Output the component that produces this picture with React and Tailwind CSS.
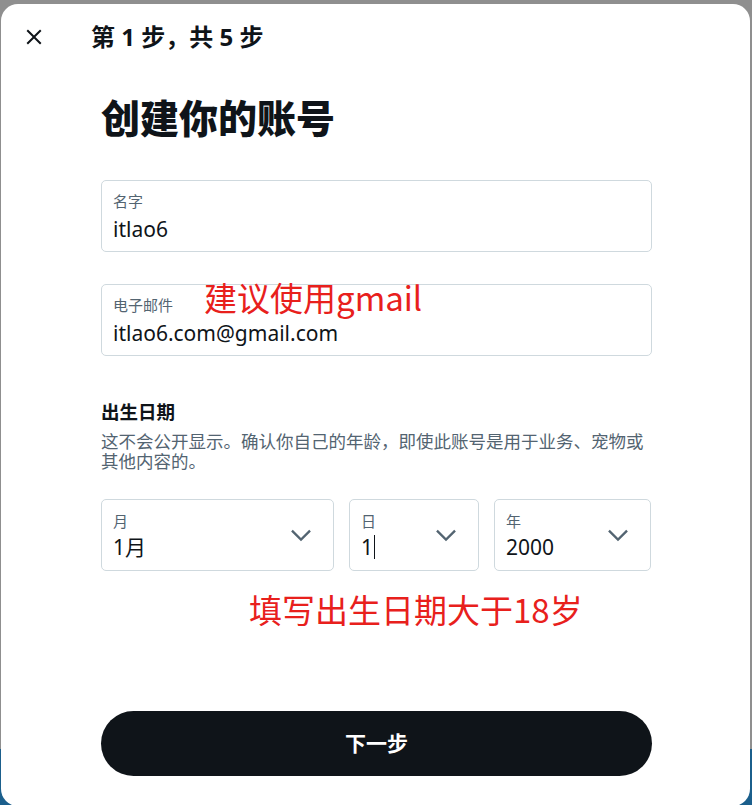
import React from 'react'

const font = "font-['Segoe_UI','Noto_Sans','Noto_Sans_CJK_SC',sans-serif]"

function Chevron() {
  return (
    <svg viewBox="0 0 24 24" className="w-[28px] h-[28px] fill-[#536471]">
      <path d="M3.543 8.96l1.414-1.42L12 14.59l7.043-7.05 1.414 1.42L12 17.41 3.543 8.96z" />
    </svg>
  )
}

function Field({ label, value, note }) {
  return (
    <div className="h-[72px] border border-[#cfd9de] rounded-[5px] px-[11px] pt-[11px] flex flex-col">
      <div className="flex items-start h-[19px]">
        <span className="text-[15px] leading-[19px] text-[#536471]">{label}</span>
        {note && (
          <span className="ml-[31px] -mt-[16px] text-[33px] leading-[34px] text-[#e8201c] font-['Noto_Sans_CJK_SC',sans-serif]">{note}</span>
        )}
      </div>
      <span className="mt-[5px] text-[21px] leading-[26px] text-[#0f1419]">{value}</span>
    </div>
  )
}

function Select({ label, value, width, caret }) {
  return (
    <div className={`${width} h-[72px] border border-[#cfd9de] rounded-[5px] pl-[11px] pr-[18px] flex items-center`}>
      <div className="flex-1 flex flex-col pt-[1px]">
        <span className="text-[15px] leading-[19px] text-[#536471]">{label}</span>
        <span className="mt-[3px] text-[21px] leading-[26px] text-[#0f1419] flex items-center">
          {value}
          {caret && <span className="inline-block w-[1px] h-[24px] bg-[#0f1419] ml-[1px]" />}
        </span>
      </div>
      <Chevron />
    </div>
  )
}

export default function App() {
  return (
    <div className={`h-[805px] overflow-hidden bg-[linear-gradient(to_bottom,#8f8f8f_93%,#1b5f8c_93%)] ${font}`}>
      <div className="ml-[1px] mr-[2px] mt-[4px] h-[802px] bg-white rounded-[17px] flex flex-col">
        <div className="h-[66px] flex items-center pl-[21px]">
          <svg viewBox="0 0 24 24" className="w-[24px] h-[24px] fill-[#0f1419]">
            <path d="M10.59 12L4.54 5.96l1.42-1.42L12 10.59l6.04-6.05 1.42 1.42L13.41 12l6.05 6.04-1.42 1.42L12 13.41l-6.04 6.05-1.42-1.42L10.59 12z" />
          </svg>
          <h2 className="ml-[45px] text-[24px] leading-[30px] font-bold text-[#0f1419]">第 1 步，共 5 步</h2>
        </div>

        <div className="pl-[100px] pr-[98px] flex flex-col">
          <h1 className="mt-[25px] text-[39px] leading-[46px] font-extrabold text-[#0f1419]">创建你的账号</h1>

          <div className="mt-[39px]">
            <Field label="名字" value="itlao6" />
          </div>
          <div className="mt-[32px]">
            <Field label="电子邮件" value="itlao6.com@gmail.com" note="建议使用gmail" />
          </div>

          <h3 className="mt-[44px] text-[18.5px] leading-[24px] font-bold text-[#0f1419]">出生日期</h3>
          <p className="mt-[7px] text-[17.5px] leading-[20px] text-[#536471]">
            这不会公开显示。确认你自己的年龄，即使此账号是用于业务、宠物或其他内容的。
          </p>

          <div className="mt-[28px] flex gap-[15px]">
            <Select width="w-[233px]" label="月" value="1月" />
            <Select width="w-[130px]" label="日" value="1" caret />
            <Select width="w-[157px]" label="年" value="2000" />
          </div>

          <p className="mt-[18px] ml-[148px] text-[33px] leading-[40px] text-[#e8201c] font-['Noto_Sans_CJK_SC',sans-serif]">
            填写出生日期大于18岁
          </p>

          <button className="mt-[82px] h-[65px] rounded-full bg-[#0f1419] text-white text-[21px] font-bold">
            下一步
          </button>
        </div>
      </div>
    </div>
  )
}
